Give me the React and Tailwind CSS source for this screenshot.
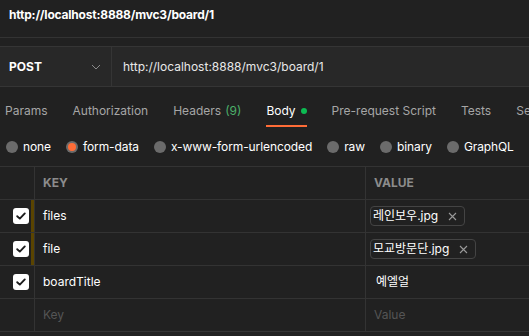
import React from "react";

const tabs = [
  { label: "Params" },
  { label: "Authorization" },
  { label: "Headers", count: "(9)" },
  { label: "Body", active: true },
  { label: "Pre-request Script" },
  { label: "Tests" },
  { label: "Settings" },
];

const bodyTypes = [
  { label: "none" },
  { label: "form-data", selected: true },
  { label: "x-www-form-urlencoded" },
  { label: "raw" },
  { label: "binary" },
  { label: "GraphQL" },
];

const rows = [
  { key: "files", file: "레인보우.jpg", marked: true },
  { key: "file", file: "모교방문단.jpg", marked: true },
  { key: "boardTitle", value: "예엘얼" },
];

const Check = () => (
  <span className="flex h-[16px] w-[16px] items-center justify-center rounded-[3px] bg-white">
    <svg width="12" height="12" viewBox="0 0 12 12" fill="none">
      <path d="M2.2 6.2 L4.8 8.6 L9.8 3.4" stroke="#1c1c1c" strokeWidth="1.9" strokeLinecap="round" strokeLinejoin="round" />
    </svg>
  </span>
);

const Radio = ({ selected }) => (
  <span className="flex h-[12px] w-[12px] items-center justify-center rounded-full bg-[#6b6b6b]">
    {selected && <span className="h-[8px] w-[8px] rounded-full bg-[#ff6c37]" />}
  </span>
);

export default function App() {
  return (
    <div
      className="h-[336px] w-[529px] overflow-hidden bg-[#212121] text-[12px] text-[#e6e6e6]"
      style={{ fontFamily: "Inter, 'Noto Sans CJK KR', sans-serif" }}
    >
      {/* request title */}
      <div className="h-[38px] border-b border-[#333333] pl-[9px] pt-[6px] font-bold tracking-[-0.2px] text-white">
        http://localhost:8888/mvc3/board/1
      </div>

      {/* method + url */}
      <div className="mt-[8px] flex h-[41px] border-y border-[#353535] bg-[#282828]">
        <div className="flex w-[112px] items-center justify-between border-r border-[#353535] pl-[9px] pr-[10px]">
          <span className="font-bold text-white">POST</span>
          <svg width="10" height="6" viewBox="0 0 10 6" fill="none">
            <path d="M1 1 L5 5 L9 1" stroke="#8a8a8a" strokeWidth="1" />
          </svg>
        </div>
        <div className="flex items-center pl-[11px] text-[#e8e8e8]">http://localhost:8888/mvc3/board/1</div>
      </div>

      {/* tabs */}
      <div className="mt-[10px] flex h-[30px] gap-[25px] whitespace-nowrap pl-[5px] text-[#a6a6a6]">
        {tabs.map((t) => (
          <div key={t.label} className={"relative flex items-start pt-[5px] " + (t.active ? "text-white" : "")}>
            {t.label}
            {t.count && <span className="ml-[4px] text-[#4caf6a]">{t.count}</span>}
            {t.active && (
              <>
                <span className="ml-[5px] mt-[6px] h-[6px] w-[6px] rounded-full bg-[#0cbb52]" />
                <span className="absolute bottom-0 left-0 right-0 h-[2px] bg-[#ff6c37]" />
              </>
            )}
          </div>
        ))}
      </div>

      {/* body types */}
      <div className="flex h-[39px] items-center gap-[15px] whitespace-nowrap pl-[6px] tracking-[-0.1px] text-white">
        {bodyTypes.map((b) => (
          <div key={b.label} className="flex items-center gap-[5px]">
            <Radio selected={b.selected} />
            <span>{b.label}</span>
          </div>
        ))}
      </div>

      {/* table */}
      <div className="border-t border-[#333333]">
        <div className="grid h-[33px] grid-cols-[35px_331px_1fr] border-b border-[#333333] font-bold text-[#8c8c8c]">
          <div className="border-r border-[#333333]" />
          <div className="flex items-center border-r border-[#333333] pl-[8px]">KEY</div>
          <div className="flex items-center pl-[8px]">VALUE</div>
        </div>
        {rows.map((r) => (
          <div key={r.key} className="grid h-[33px] grid-cols-[35px_331px_1fr] border-b border-[#333333]">
            <div className="flex items-center justify-between border-r border-[#333333] pl-[13px]">
              <Check />
              {r.marked ? <span className="h-full w-[3px] bg-[#5a4400]" /> : <span />}
            </div>
            <div className="flex items-center border-r border-[#333333] pl-[8px] text-white">{r.key}</div>
            <div className="flex items-center pl-[4px] text-white">
              {r.file ? (
                <span className="flex h-[20px] items-center gap-[10px] rounded-[4px] border border-[#444444] pl-[2px] pr-[7px]">
                  {r.file}
                  <svg width="9" height="9" viewBox="0 0 9 9" fill="none">
                    <path d="M1 1 L8 8 M8 1 L1 8" stroke="#9a9a9a" strokeWidth="1.1" />
                  </svg>
                </span>
              ) : (
                <span className="pl-[6px]">{r.value}</span>
              )}
            </div>
          </div>
        ))}
        <div className="grid h-[33px] grid-cols-[35px_331px_1fr] border-b border-[#333333] text-[#555555]">
          <div className="border-r border-[#333333]" />
          <div className="flex items-center border-r border-[#333333] pl-[8px]">Key</div>
          <div className="flex items-center pl-[8px]">Value</div>
        </div>
      </div>
    </div>
  );
}
